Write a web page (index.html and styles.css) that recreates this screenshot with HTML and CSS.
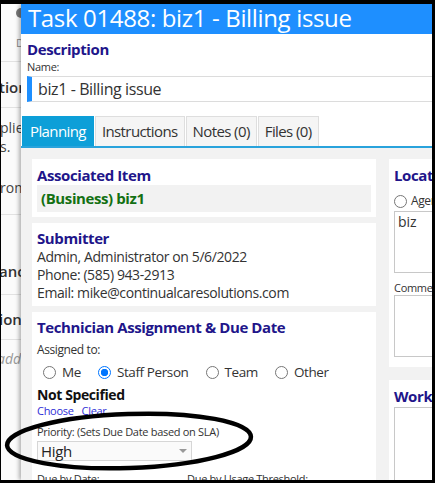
FILE: index.html
```html
<!DOCTYPE html>
<html lang="en">
<head>
    <meta charset="UTF-8">
    <meta name="viewport" content="width=device-width, initial-scale=1.0">
    <title>Task 01488</title>
    <link rel="stylesheet" href="styles.css">
</head>
<body>
    <div class="screen">
        <!-- page underneath the dialog -->
        <div class="page">
            <div class="page-head"><span class="page-dot"></span><span class="page-crumb">D</span></div>
            <div class="page-row row-a"><p class="page-title">tions</p></div>
            <div class="page-row row-b">
                <p class="page-text">plies</p>
                <p class="page-text">s.</p>
                <p class="page-text gap">rom</p>
            </div>
            <div class="page-row row-c"><p class="page-title">ance</p></div>
            <div class="page-row row-d"><p class="page-title">ions</p></div>
            <div class="page-row row-e"><p class="page-note">add</p></div>
        </div>

        <div class="dialog">
            <div class="dialog-title">Task 01488: biz1 - Billing issue</div>

            <div class="desc">
                <h2 class="heading">Description</h2>
                <div class="name-label">Name:</div>
                <div class="name-input">biz1 - Billing issue</div>
            </div>

            <div class="tabs">
                <div class="tab active">Planning</div>
                <div class="tab">Instructions</div>
                <div class="tab">Notes (0)</div>
                <div class="tab">Files (0)</div>
            </div>

            <div class="tab-body">
                <div class="col-main">
                    <div class="panel assoc-panel">
                        <h3 class="heading">Associated Item</h3>
                        <div class="assoc">(Business) biz1</div>
                    </div>

                    <div class="panel submitter">
                        <h3 class="heading">Submitter</h3>
                        <div class="line">Admin, Administrator on 5/6/2022</div>
                        <div class="line">Phone: (585) 943-2913</div>
                        <div class="line">Email: mike@continualcaresolutions.com</div>
                    </div>

                    <div class="panel tech">
                        <h3 class="heading">Technician Assignment &amp; Due Date</h3>
                        <div class="field-label assigned">Assigned to:</div>
                        <div class="assign-row">
                            <label class="opt"><input type="radio" name="assign"><span>Me</span></label>
                            <label class="opt"><input type="radio" name="assign" checked><span>Staff Person</span></label>
                            <label class="opt"><input type="radio" name="assign"><span>Team</span></label>
                            <label class="opt"><input type="radio" name="assign"><span>Other</span></label>
                        </div>
                        <div class="tech-name">Not Specified</div>
                        <div class="links"><a href="#">Choose</a><a href="#">Clear</a></div>
                        <div class="field-label priority">Priority: (Sets Due Date based on SLA)</div>
                        <div class="select"><span>High</span><span class="caret"></span></div>
                        <div class="due-row">
                            <div class="field-label">Due by Date:</div>
                            <div class="field-label">Due by Usage Threshold:</div>
                        </div>
                    </div>
                </div>

                <div class="col-side">
                    <div class="panel location">
                        <h3 class="heading">Location</h3>
                        <label class="opt loc-opt"><input type="radio" name="loc"><span>Agency</span></label>
                        <div class="textbox">biz</div>
                        <div class="field-label comments">Comments</div>
                        <div class="textbox"></div>
                    </div>
                    <div class="panel work">
                        <h3 class="heading">Work Orders</h3>
                        <div class="textbox tall"></div>
                    </div>
                </div>
            </div>
        </div>

        <!-- marker ring drawn around the priority field -->
        <svg class="markup" width="431" height="476" viewBox="0 0 431 476">
            <ellipse cx="128" cy="437" rx="122" ry="27" transform="rotate(-2 128 437)" fill="none" stroke="#000" stroke-width="4.5"/>
        </svg>
    </div>
</body>
</html>
```

FILE: styles.css
```css
*{
    margin: 0;
    padding: 0;
    box-sizing: border-box;
}
body{
    background: #000;
    font-family: "Open Sans", "Noto Sans", sans-serif;
    color: #333;
}
.screen{
    position: relative;
    width: 435px;
    height: 483px;
    border-style: solid;
    border-color: #000;
    border-width: 4px 3px 3px 1px;
    overflow: hidden;
    background: #fbfbfb;
}

/* page behind the dialog */
.page-head{
    height: 58px;
    padding: 4px 0 0 15px;
    border-bottom: 1px solid #e2e2e2;
}
.page-dot{
    display: block;
    width: 10px;
    height: 10px;
    border-radius: 50%;
    background: #777;
}
.page-crumb{
    display: block;
    margin-top: 19px;
    font-size: 11px;
    line-height: 12px;
    color: #888;
}
.page-row{
    border-bottom: 1px solid #e2e2e2;
}
.row-a{ height: 46px; padding-top: 15px; }
.row-b{ height: 107px; padding-top: 10px; }
.row-c{ height: 80px; padding-top: 46px; }
.row-d{ height: 45px; padding-top: 14px; }
.row-e{ height: 60px; padding-top: 9px; border-bottom: none; }
.page-title{
    margin-left: -2px;
    font-size: 15px;
    font-weight: 600;
    line-height: 20px;
    color: #333;
}
.page-text{
    margin-left: -1px;
    font-size: 14px;
    line-height: 19px;
    color: #444;
}
.page-text.gap{ margin-top: 22px; }
.page-note{
    margin-left: -4px;
    font-size: 14px;
    line-height: 19px;
    font-style: italic;
    color: #999;
}

/* dialog */
.dialog{
    position: absolute;
    left: 20px;
    top: 0;
    bottom: 0;
    width: 700px;
    background: #fff;
    box-shadow: -2px 0 4px rgba(0, 0, 0, 0.3);
}
.dialog-title{
    height: 30px;
    padding-left: 7px;
    background: #1e8fff;
    color: #fff;
    font-size: 24px;
    line-height: 27px;
    letter-spacing: -0.35px;
}
.heading{
    font-size: 15px;
    font-weight: 700;
    line-height: 20px;
    letter-spacing: -0.4px;
    color: #21158a;
}
.desc{
    padding: 5px 0 0 6px;
}
.name-label{
    margin-top: 2px;
    font-size: 11px;
    line-height: 12px;
    letter-spacing: -0.3px;
    color: #333;
}
.name-input{
    margin-top: 3px;
    height: 26px;
    padding-left: 6px;
    border: 1px solid #dcdcdc;
    border-left: 5px solid #1e8fff;
    font-size: 16px;
    line-height: 24px;
    letter-spacing: -0.4px;
    color: #333;
}

/* tabs */
.tabs{
    display: flex;
    gap: 1px;
    margin-top: 14px;
    padding-left: 1px;
    border-bottom: 2px solid #29a3dc;
}
.tab{
    height: 30px;
    padding: 0 6px;
    border: 1px solid #dedede;
    border-bottom: none;
    background: #f5f5f5;
    font-size: 15px;
    line-height: 29px;
    letter-spacing: -0.6px;
    color: #333;
}
.tab.active{
    padding: 0 7px;
    background: #0d9fd8;
    border-color: #0d9fd8;
    color: #fff;
}
.tab-body{
    display: flex;
    align-items: flex-start;
    gap: 13px;
    height: 400px;
    padding: 11px 0 0 11px;
    background: #f2f2f2;
}
.col-main{
    display: flex;
    flex-direction: column;
    gap: 6px;
    width: 344px;
}
.col-side{
    display: flex;
    flex-direction: column;
    gap: 13px;
    width: 260px;
}
.panel{
    background: #fff;
    padding: 6px 5px 5px;
}

/* associated item */
.assoc{
    height: 27px;
    padding-left: 4px;
    background: #f2f2f2;
    font-size: 15px;
    font-weight: 700;
    line-height: 27px;
    letter-spacing: -0.4px;
    color: #137013;
}

/* submitter */
.submitter{
    padding: 5px 5px 4px;
}
.line{
    font-size: 14px;
    line-height: 18px;
    letter-spacing: -0.4px;
    color: #333;
}

/* technician */
.tech{
    padding-top: 5px;
}
.field-label{
    font-size: 11px;
    line-height: 14px;
    letter-spacing: -0.3px;
    color: #333;
}
.field-label.assigned{
    margin-top: 5px;
    font-size: 12px;
    line-height: 16px;
    letter-spacing: -0.4px;
}
.assign-row{
    display: flex;
    align-items: center;
    gap: 17px;
    height: 20px;
    margin-top: 4px;
    padding-left: 6px;
}
.opt{
    display: flex;
    align-items: center;
    gap: 6px;
    font-size: 13.5px;
    line-height: 20px;
    letter-spacing: -0.4px;
    color: #333;
}
.opt input{
    appearance: none;
    -webkit-appearance: none;
    width: 13px;
    height: 13px;
    border: 1px solid #767676;
    border-radius: 50%;
    background: #fff;
}
.opt input:checked{
    border-color: #0075ff;
    background: radial-gradient(circle, #0075ff 0 3.4px, #fff 4px);
}
.tech-name{
    margin-top: 4px;
    font-size: 14px;
    font-weight: 700;
    line-height: 18px;
    letter-spacing: -0.4px;
    color: #111;
}
.links{
    display: flex;
    gap: 8px;
    font-size: 11px;
    line-height: 14px;
    letter-spacing: -0.3px;
}
.links a{
    color: #2e2ed6;
    text-decoration: none;
}
.field-label.priority{
    margin-top: 7px;
}
.select{
    display: flex;
    align-items: center;
    justify-content: space-between;
    width: 155px;
    height: 20px;
    margin-top: 2px;
    padding: 0 4px 0 3px;
    border: 1px solid #d6d6d6;
    background: #fafafa;
    font-size: 15px;
    line-height: 18px;
    letter-spacing: -0.3px;
    color: #222;
}
.caret{
    width: 0;
    height: 0;
    border-left: 4px solid transparent;
    border-right: 4px solid transparent;
    border-top: 4px solid #999;
}
.due-row{
    display: grid;
    grid-template-columns: 150px 1fr;
    margin-top: 11px;
}

/* side column */
.location{
    padding-bottom: 10px;
}
.loc-opt{
    gap: 4px;
    margin-top: 8px;
    font-size: 12px;
    line-height: 16px;
}
.textbox{
    height: 62px;
    padding: 1px 3px;
    border: 1px solid #c8c8c8;
    background: #fff;
    font-size: 14px;
    line-height: 18px;
    color: #333;
}
.loc-opt + .textbox{
    margin-top: 2px;
}
.field-label.comments{
    margin-top: 8px;
}
.work .textbox.tall{
    height: 100px;
    margin-top: 1px;
}

.markup{
    position: absolute;
    left: 0;
    top: 0;
    pointer-events: none;
}
```
